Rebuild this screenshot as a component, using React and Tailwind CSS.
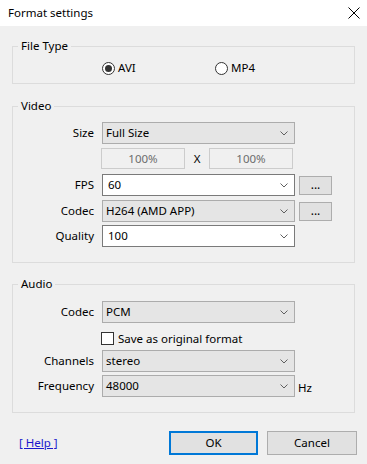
import React from "react";

function Chevron() {
  return (
    <svg width="8" height="5" viewBox="0 0 8 5" className="shrink-0">
      <path d="M0.5 0.5 L4 4 L7.5 0.5" fill="none" stroke="#606060" strokeWidth="1" />
    </svg>
  );
}

function Select({ value, white = false }) {
  return (
    <div
      className={
        "w-[193px] h-[22px] border flex items-center justify-between pr-[6px] " +
        (white ? "bg-white border-[#7a7a7a] pl-[5px]" : "bg-[#e5e5e5] border-[#acacac] pl-[3px]")
      }
    >
      <span className="leading-[16px] whitespace-nowrap">{value}</span>
      <Chevron />
    </div>
  );
}

function Row({ label, children, className = "" }) {
  return (
    <div className={"flex items-center h-[22px] " + className}>
      <div className="w-[81px] text-right leading-[16px] whitespace-nowrap">{label}</div>
      <div className="ml-[8px] flex items-center">{children}</div>
    </div>
  );
}

function DotsButton() {
  return (
    <div className="ml-[4px] w-[33px] h-[19px] bg-[#e1e1e1] border border-[#adadad] flex items-center justify-center leading-[10px] text-[12px]">
      ...
    </div>
  );
}

function Group({ title, className = "", children }) {
  return (
    <div className={"border border-[#dcdcdc] flex flex-col " + className}>
      <div className="-mt-[9px] ml-[5px] px-[3px] bg-[#f0f0f0] w-fit leading-[16px]">{title}</div>
      {children}
    </div>
  );
}

function Radio({ checked, label }) {
  return (
    <div className="flex items-center h-[16px]">
      <div className="w-[13px] h-[13px] rounded-full border border-[#333333] bg-white flex items-center justify-center">
        {checked && <div className="w-[7px] h-[7px] rounded-full bg-[#333333]" />}
      </div>
      <span className="ml-[3px] leading-[16px]">{label}</span>
    </div>
  );
}

export default function App() {
  return (
    <div className="w-[367px] h-[464px] bg-[#f0f0f0] flex flex-col text-[11.5px] text-[#000000] font-['Noto_Sans',sans-serif]">
      <div className="h-[26px] bg-white flex items-center justify-between pl-[8px] pr-[7px]">
        <span className="leading-[16px]">Format settings</span>
        <svg width="12" height="12" viewBox="0 0 12 12">
          <path d="M0.5 0.5 L11.5 11.5 M11.5 0.5 L0.5 11.5" stroke="#000" strokeWidth="1" fill="none" />
        </svg>
      </div>

      <div className="px-[12px] flex flex-col">
        <Group title="File Type" className="mt-[20px] h-[38px]">
          <div className="mt-[6px] flex pl-[89px]">
            <div className="w-[113px]">
              <Radio checked label="AVI" />
            </div>
            <Radio label="MP4" />
          </div>
        </Group>

        <Group title="Video" className="mt-[22px] h-[157px]">
          <Row label="Size" className="mt-[8px]">
            <Select value="Full Size" />
          </Row>
          <div className="mt-[4px] flex items-center h-[21px] pl-[88px]">
            <div className="w-[84px] h-[21px] border border-[#cccccc] bg-[#f0f0f0] text-[#6d6d6d] flex items-center justify-center">100%</div>
            <div className="w-[24px] text-center">X</div>
            <div className="w-[84px] h-[21px] border border-[#cccccc] bg-[#f0f0f0] text-[#6d6d6d] flex items-center justify-center">100%</div>
          </div>
          <Row label="FPS" className="mt-[5px]">
            <Select value="60" white />
            <DotsButton />
          </Row>
          <Row label="Codec" className="mt-[4px]">
            <Select value="H264 (AMD APP)" />
            <DotsButton />
          </Row>
          <Row label="Quality" className="mt-[3px]">
            <Select value="100" white />
          </Row>
        </Group>

        <Group title="Audio" className="mt-[21px] h-[129px]">
          <Row label="Codec" className="mt-[9px]">
            <Select value="PCM" />
          </Row>
          <div className="mt-[9px] flex items-center h-[13px] pl-[88px]">
            <div className="w-[13px] h-[13px] border border-[#333333] bg-white" />
            <span className="ml-[4px] leading-[16px]">Save as original format</span>
          </div>
          <Row label="Channels" className="mt-[5px]">
            <Select value="stereo" />
          </Row>
          <Row label="Frequency" className="mt-[3px]">
            <Select value="48000" />
            <span className="ml-[3px] mt-[3px] leading-[16px]">Hz</span>
          </Row>
        </Group>
      </div>

      <div className="mt-[18px] flex items-center pl-[19px] pr-[10px]">
        <span className="text-[#1a1acc] underline leading-[16px]">[ Help ]</span>
        <div className="ml-auto w-[89px] h-[24px] bg-[#e1e1e1] border-2 border-[#0078d7] flex items-center justify-center leading-[16px]">OK</div>
        <div className="ml-[9px] w-[90px] h-[24px] bg-[#e1e1e1] border border-[#adadad] flex items-center justify-center leading-[16px]">Cancel</div>
      </div>
    </div>
  );
}
